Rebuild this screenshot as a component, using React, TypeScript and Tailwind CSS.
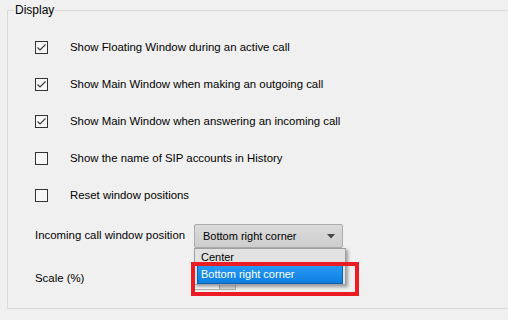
import React from 'react';

const rows = [
  { label: 'Show Floating Window during an active call', checked: true },
  { label: 'Show Main Window when making an outgoing call', checked: true },
  { label: 'Show Main Window when answering an incoming call', checked: true },
  { label: 'Show the name of SIP accounts in History', checked: false },
  { label: 'Reset window positions', checked: false },
];

function CheckBox({ checked }: { checked: boolean }) {
  return (
    <span className="flex h-[13px] w-[13px] shrink-0 items-center justify-center border border-[#333333] bg-[#f7f7f7]">
      {checked && (
        <svg width="11" height="11" viewBox="0 0 11 11" fill="none">
          <path d="M1.5 5.5 L4 8 L9.5 2.5" stroke="#3c3c3c" strokeWidth="1.2" />
        </svg>
      )}
    </span>
  );
}

export default function App() {
  return (
    <div
      className="relative h-[320px] w-[508px] overflow-hidden bg-[#f0f0f0] text-[11.4px] text-black"
      style={{ fontFamily: '"Liberation Sans", Arial, sans-serif' }}
    >
      <fieldset className="ml-[7px] mt-[3px] h-[306px] w-[540px] border border-[#d9d9d9]">
        <legend className="ml-[6px] px-[1px] text-[12px] leading-[14px]">Display</legend>

        <div className="pl-[27px]">
          <div className="mt-[12px] flex flex-col">
            {rows.map((r) => (
              <div key={r.label} className="flex h-[37px] items-center gap-[22px]">
                <CheckBox checked={r.checked} />
                <span>{r.label}</span>
              </div>
            ))}
          </div>

          {/* combo row */}
          <div className="mt-[10px] flex h-[24px] items-center">
            <span className="w-[159px]">Incoming call window position</span>
            <div className="flex h-[24px] w-[149px] items-center justify-between rounded-[2px] border border-[#adadad] bg-gradient-to-b from-[#dadada] to-[#cecece] pl-[8px] pr-[7px]">
              <span className="text-[11px]">Bottom right corner</span>
              <svg width="8" height="5" viewBox="0 0 8 5">
                <path d="M0 0 H8 L4 4.5 Z" fill="#444444" />
              </svg>
            </div>
          </div>

          {/* scale row */}
          <div className="mt-[20px] flex h-[22px] items-center">
            <span className="w-[159px]">Scale (%)</span>
            <div className="flex h-[22px] w-[42px] border border-[#adadad] bg-white">
              <div className="flex-1" />
              <div className="w-[16px] border-l border-[#adadad] bg-[#dcdcdc]" />
            </div>
          </div>
        </div>
      </fieldset>

      {/* open dropdown list */}
      <div className="absolute left-[194px] top-[248px] h-[37px] w-[152px] border border-[#a0a0a0] bg-[#e2e2e2] shadow-[2px_2px_3px_rgba(0,0,0,0.35)]">
        <div className="flex h-[16px] items-center pl-[6px] text-[11px]">Center</div>
        <div className="mx-[2px] flex h-[19px] items-center border border-[#0a64b4] bg-gradient-to-b from-[#2898f5] to-[#0a7fe0] pl-[3px] text-[11px] text-white">
          Bottom right corner
        </div>
      </div>

      {/* red annotation */}
      <div className="pointer-events-none absolute left-[191px] top-[262px] h-[34px] w-[168px] border-4 border-[#ec1c24]" />
    </div>
  );
}
